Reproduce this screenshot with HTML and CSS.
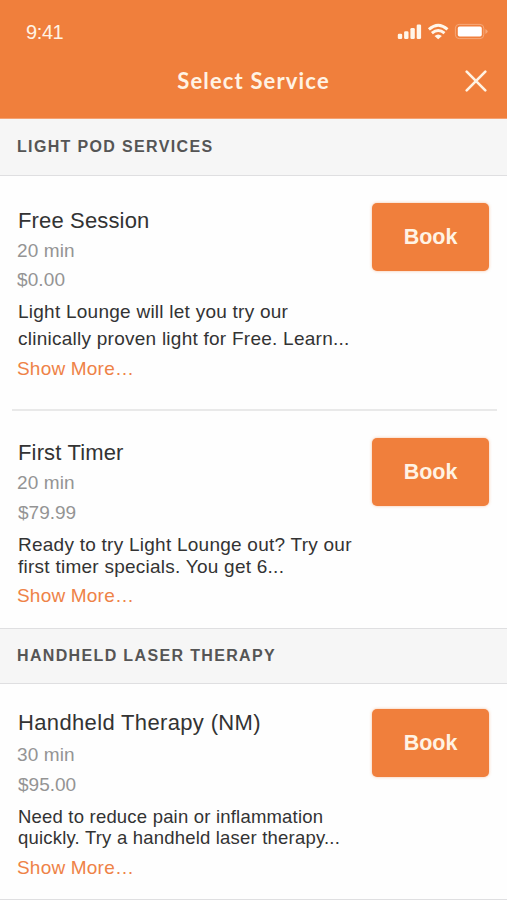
FILE: index.html
```html
<!DOCTYPE html>
<html lang="en">
<head>
<meta charset="utf-8">
<meta name="viewport" content="width=device-width, initial-scale=1">
<title>Select Service</title>
<link rel="stylesheet" href="styles.css">
</head>
<body>
  <header class="top">
    <div class="status">
      <span class="time">9:41</span>
      <svg class="status-icons" width="92" height="18" viewBox="0 0 92 18">
        <g fill="#fff6ea">
          <rect x="0.8" y="10.8" width="4.4" height="5.2" rx="1.3"/>
          <rect x="7.1" y="8.3" width="4.4" height="7.7" rx="1.3"/>
          <rect x="13.4" y="5" width="4.4" height="11" rx="1.3"/>
          <rect x="19.7" y="1.5" width="4.4" height="14.5" rx="1.3"/>
          <path d="M41.2 16.2 L37.5 12.9 Q41.2 9.9 44.9 12.9 Z"/>
        </g>
        <g fill="none" stroke="#fff6ea" stroke-width="2.9">
          <path d="M31.9 6.3 Q41.2 -2 50.5 6.3"/>
          <path d="M34.9 10.2 Q41.2 4.8 47.5 10.2"/>
        </g>
        <rect x="58.4" y="1.4" width="28.4" height="14.2" rx="3.8" fill="none" stroke="#f6a878"/>
        <rect x="60.8" y="3.6" width="24" height="10" rx="1.8" fill="#fff"/>
        <path d="M88.4 6 Q93 8.5 88.4 11 Z" fill="#f6a878"/>
      </svg>
    </div>
    <div class="bar">
      <h1>Select Service</h1>
      <svg class="close" width="22" height="22" viewBox="0 0 22 22">
        <path d="M1.7 1.7 L20.3 20.3 M20.3 1.7 L1.7 20.3" stroke="#fff3e4" stroke-width="2.6" stroke-linecap="round"/>
      </svg>
    </div>
  </header>

  <h2 class="section first">LIGHT POD SERVICES</h2>

  <div class="service free">
    <div class="info">
      <h3>Free Session</h3>
      <p class="meta">20 min</p>
      <p class="meta">$0.00</p>
      <p class="desc">Light Lounge will let you try our<br>clinically proven light for Free. Learn...</p>
      <a class="more">Show More…</a>
    </div>
    <button type="button">Book</button>
  </div>

  <hr>

  <div class="service timer">
    <div class="info">
      <h3>First Timer</h3>
      <p class="meta">20 min</p>
      <p class="meta price">$79.99</p>
      <p class="desc">Ready to try Light Lounge out? Try our<br>first timer specials. You get 6...</p>
      <a class="more">Show More…</a>
    </div>
    <button type="button">Book</button>
  </div>

  <h2 class="section">HANDHELD LASER THERAPY</h2>

  <div class="service handheld">
    <div class="info">
      <h3>Handheld Therapy (NM)</h3>
      <p class="meta">30 min</p>
      <p class="meta price">$95.00</p>
      <p class="desc">Need to reduce pain or inflammation<br>quickly. Try a handheld laser therapy...</p>
      <a class="more">Show More…</a>
    </div>
    <button type="button">Book</button>
  </div>
</body>
</html>
```
FILE: styles.css
```css
* {
  box-sizing: border-box;
}

body {
  margin: 0;
  height: 900px;
  overflow: hidden;
  background-color: #fefefe;
  color: #333;
  font-family: "Liberation Sans", Arial, sans-serif;
}

h1, h2, h3, p {
  margin: 0;
  font-weight: normal;
  white-space: nowrap;
}

.top {
  height: 119px;
  padding-top: 20px;
  background-color: #f07f3c;
  border-bottom: 1px solid #f4a273;
  color: #fff3e4;
}

.status {
  display: flex;
  justify-content: space-between;
  height: 24px;
  padding: 0 18px 0 26px;
}

.time {
  font-size: 20px;
  line-height: 24px;
  letter-spacing: -0.4px;
}

.status-icons {
  margin-top: 3px;
}

.bar {
  display: grid;
  grid-template-columns: 1fr auto 1fr;
  align-items: center;
  height: 36px;
  margin-top: 19px;
  padding-right: 20px;
  padding-left: 20px;
}

.bar h1 {
  grid-column: 2;
  font-family: Lato, sans-serif;
  font-size: 22px;
  font-weight: bold;
  line-height: 36px;
  letter-spacing: 1.15px;
}

.close {
  justify-self: end;
}

.section {
  height: 56px;
  padding-left: 17px;
  background-color: #f6f6f6;
  border-top: 1px solid #dfdfe1;
  border-bottom: 1px solid #dfdfe1;
  color: #555;
  font-size: 16px;
  font-weight: bold;
  line-height: 54px;
  letter-spacing: 1.35px;
}

.section.first {
  height: 57px;
  border-top: none;
  line-height: 56px;
}

.service {
  display: flex;
  justify-content: space-between;
  align-items: flex-start;
  padding: 0 18px;
}

.service h3 {
  font-size: 22px;
  line-height: 28px;
  letter-spacing: 0.15px;
}

.meta {
  margin-left: -1px;
  color: #949494;
  font-size: 19px;
  line-height: 30px;
  letter-spacing: 0.1px;
}

.price {
  margin-left: 0;
  letter-spacing: 0;
}

.desc {
  font-size: 19px;
  line-height: 22px;
  letter-spacing: 0.25px;
}

.more {
  display: block;
  margin-left: -1px;
  color: #ee8247;
  font-size: 19px;
  line-height: 24px;
  letter-spacing: 0.2px;
}

button {
  width: 117px;
  height: 68px;
  padding: 0;
  border: none;
  border-radius: 5px;
  background-color: #f07f3c;
  box-shadow: 0 0 3px rgba(240, 127, 60, 0.5);
  color: #fff3e4;
  font-family: inherit;
  font-size: 21.5px;
  font-weight: bold;
  cursor: pointer;
}

hr {
  height: 2px;
  margin: 0 10px 0 12px;
  border: none;
  background-color: #e9e9e9;
}

/* each card has its own spacing */
.free {
  height: 233px;
  padding-top: 27px;
}
.free h3 {
  margin: 4px 0 1px;
}
.free .meta {
  line-height: 29px;
}
.free .desc {
  margin: 4px 0 5px;
  line-height: 27px;
}

.timer {
  height: 217px;
  padding-top: 27px;
}
.timer h3 {
  margin: 1px 0;
}
.timer .desc {
  margin: 6px 0;
}

.handheld {
  height: 216px;
  padding-top: 25px;
  border-bottom: 1px solid #dfdfe1;
}
.handheld h3 {
  margin: 0 0 3px;
  letter-spacing: 0.35px;
}
.handheld .desc {
  margin: 6px 0 8px;
  font-size: 18.5px;
  line-height: 21px;
  letter-spacing: 0.2px;
}
```
